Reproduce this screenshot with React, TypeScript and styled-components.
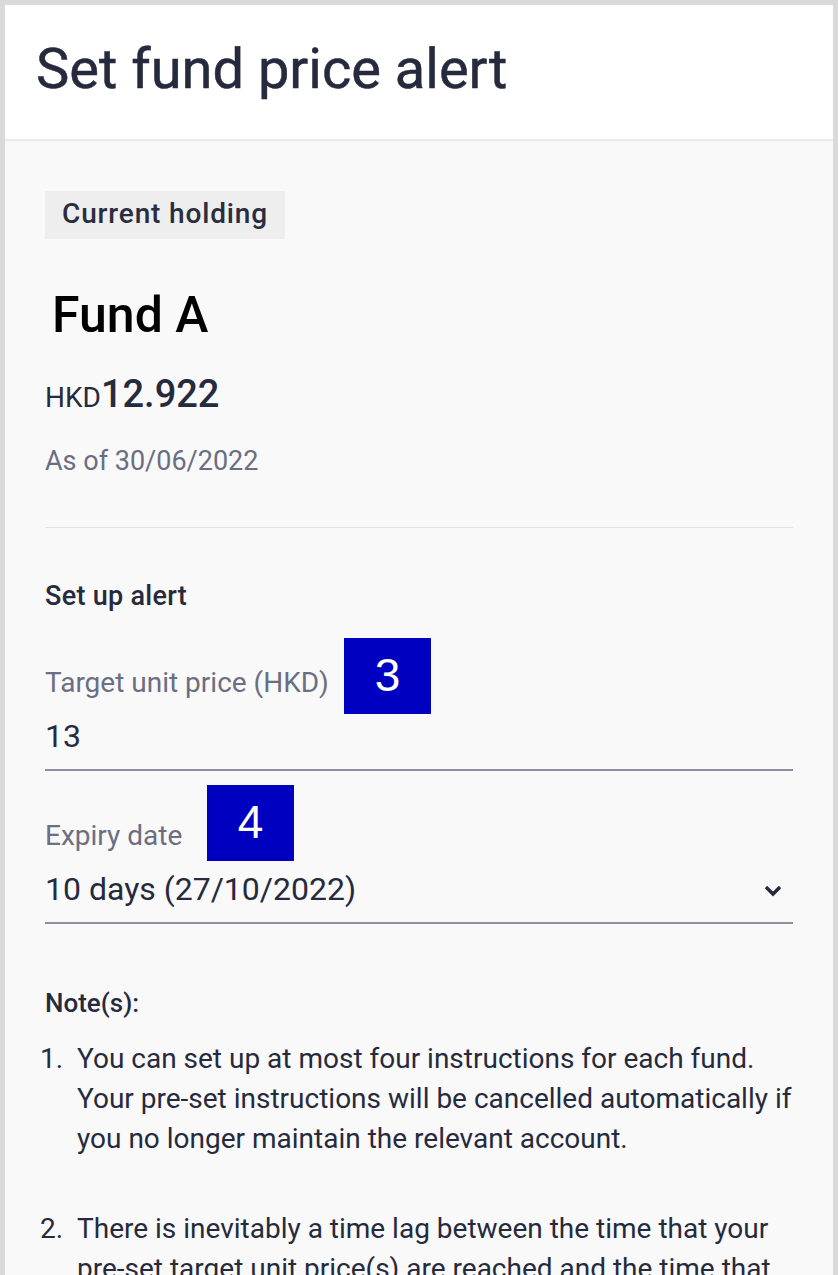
import React from "react";
import styled, { createGlobalStyle } from "styled-components";

const Global = createGlobalStyle`
  html, body { margin: 0; padding: 0; background: #d9d9d9; }
  body { font-family: Roboto, "Liberation Sans", Arial, sans-serif; color: #262a3d; }
  * { box-sizing: border-box; }
`;

const Frame = styled.div`
  width: 838px;
  height: 1275px;
  padding: 5px 5px 0 5px;
  background: #d9d9d9;
  overflow: hidden;
`;

const Panel = styled.div`
  height: 100%;
  background: #f9f9f9;
  display: flex;
  flex-direction: column;
`;

const Header = styled.header`
  flex-shrink: 0;
  background: #ffffff;
  height: 136px;
  border-bottom: 2px solid #e9e9e9;
  padding: 36px 0 0 31px;
`;

const Title = styled.h1`
  margin: 0;
  font-weight: 400;
  font-size: 56px;
  line-height: 56px;
  color: #262a3d;
  -webkit-text-stroke: 0.5px #262a3d;
`;

const Body = styled.main`
  flex-shrink: 0;
  padding: 50px 40px 0 40px;
  display: flex;
  flex-direction: column;
`;

const Tag = styled.div`
  align-self: flex-start;
  background: #eeeeee;
  height: 48px;
  padding: 0 17px 3px 17px;
  display: flex;
  align-items: center;
  font-size: 28px;
  font-weight: 500;
  letter-spacing: 0.85px;
  color: #2a2d40;
`;

const FundName = styled.div`
  margin: 46px 0 0 7px;
  font-size: 50px;
  font-weight: 500;
  color: #000;
  line-height: 60px;
`;

const Price = styled.div`
  margin-top: 27px;
  font-size: 38px;
  line-height: 44px;
`;

const Currency = styled.span`
  font-size: 28px;
  line-height: 1;
  color: #262a3d;
`;

const Amount = styled.span`
  font-weight: 500;
  color: #262a3d;
`;

const AsOf = styled.div`
  margin-top: 29px;
  font-size: 27px;
  color: #6b6e81;
  line-height: 32px;
`;

const Divider = styled.hr`
  border: none;
  border-top: 1px solid #e3e3e3;
  margin: 50px 0 0 0;
`;

const SectionTitle = styled.div`
  margin-top: 52px;
  font-size: 27px;
  font-weight: 500;
  letter-spacing: 0.3px;
  color: #262a3d;
  line-height: 32px;
`;

const Field = styled.div<{ $gap: number }>`
  position: relative;
  display: flex;
  flex-direction: column;
  gap: 17px;
  margin-top: ${(p) => p.$gap}px;
  border-bottom: 2px solid #8e8fa2;
  padding-bottom: 13px;
`;

const Label = styled.div`
  font-size: 28px;
  line-height: 32px;
  color: #6b6e81;
`;

const Badge = styled.span<{ $left: number; $top: number }>`
  position: absolute;
  left: ${(p) => p.$left}px;
  top: ${(p) => p.$top}px;
  width: 87px;
  height: 76px;
  background: #0000c0;
  color: #ffffff;
  font-family: "Liberation Sans", Arial, sans-serif;
  font-size: 46px;
  display: flex;
  align-items: center;
  justify-content: center;
  padding-bottom: 2px;
`;

const Value = styled.div`
  display: flex;
  align-items: center;
  justify-content: space-between;
  font-size: 32px;
  color: #262a3d;
  line-height: 40px;
`;

const Chevron = styled.svg`
  width: 16px;
  height: 11px;
  margin-right: 12px;
  margin-top: 4px;
`;

const NotesTitle = styled.div`
  margin-top: 63px;
  font-size: 26px;
  font-weight: 500;
  color: #262a3d;
  line-height: 32px;
`;

const List = styled.ol`
  margin: 20px 0 0 -5px;
  padding: 0;
  list-style: none;
  display: flex;
  flex-direction: column;
  gap: 50px;
`;

const Item = styled.li`
  display: grid;
  grid-template-columns: 37px 1fr;
  font-size: 28px;
  line-height: 40px;
  color: #262a3d;
`;

const Num = styled.span`
  color: #262a3d;
`;

const notes = [
  "You can set up at most four instructions for each fund. Your pre-set instructions will be cancelled automatically if you no longer maintain the relevant account.",
  "There is inevitably a time lag between the time that your pre-set target unit price(s) are reached and the time that you receive the alert.",
];

export default function App() {
  return (
    <>
      <Global />
      <Frame>
        <Panel>
          <Header>
            <Title>Set fund price alert</Title>
          </Header>
          <Body>
            <Tag>Current holding</Tag>
            <FundName>Fund A</FundName>
            <Price>
              <Currency>HKD</Currency>
              <Amount>12.922</Amount>
            </Price>
            <AsOf>As of 30/06/2022</AsOf>
            <Divider />
            <SectionTitle>Set up alert</SectionTitle>
            <Field $gap={55}>
              <Label>Target unit price (HKD)</Label>
              <Value>13</Value>
              <Badge $left={299} $top={-29}>3</Badge>
            </Field>
            <Field $gap={49}>
              <Label>Expiry date</Label>
              <Value>
                10 days (27/10/2022)
                <Chevron viewBox="0 0 16 11">
                  <path d="M2.2 2.2 L8 8 L13.8 2.2" fill="none" stroke="#262a3d" strokeWidth="3.4" strokeLinecap="square" />
                </Chevron>
              </Value>
              <Badge $left={162} $top={-35}>4</Badge>
            </Field>
            <NotesTitle>Note(s):</NotesTitle>
            <List>
              {notes.map((n, i) => (
                <Item key={i}>
                  <Num>{i + 1}.</Num>
                  <span>{n}</span>
                </Item>
              ))}
            </List>
          </Body>
        </Panel>
      </Frame>
    </>
  );
}
